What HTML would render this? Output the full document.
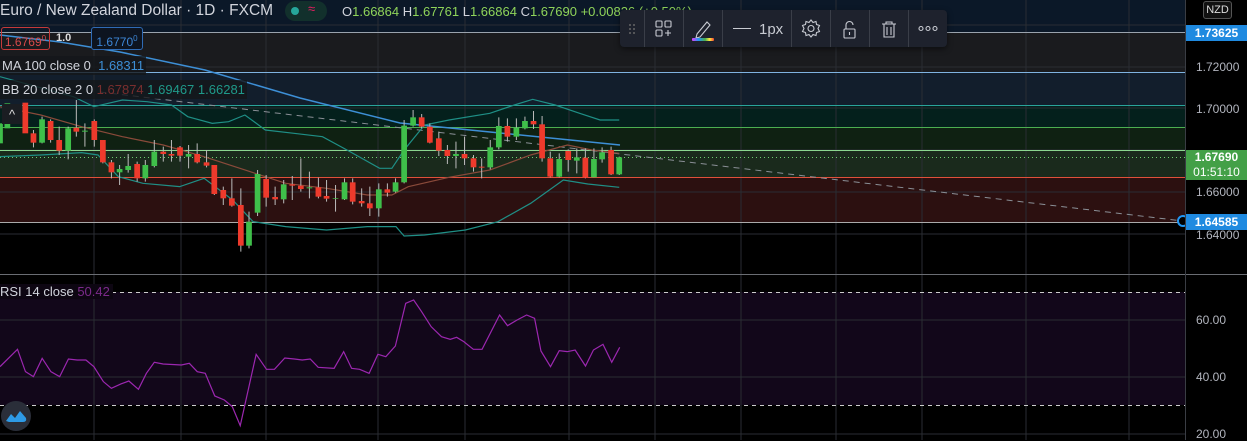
<!DOCTYPE html>
<html><head><meta charset="utf-8"><style>
body{margin:0;width:1247px;height:440px;overflow:hidden;background:#000;font-family:"Liberation Sans",sans-serif;position:relative}
.t{position:absolute;white-space:nowrap}
.lbl{position:absolute;right:0;width:61px;color:#fff;font-size:12px;text-align:center;font-weight:bold}
</style></head><body>
<svg width="1247" height="440" style="position:absolute;left:0;top:0">
<rect x="0" y="0" width="1185" height="32" fill="#0b1828"/>
<rect x="0" y="32" width="1185" height="40" fill="#1a1b1e"/>
<rect x="0" y="72" width="1185" height="33" fill="#121e2c"/>
<rect x="0" y="105" width="1185" height="22" fill="#04201c"/>
<rect x="0" y="127" width="1185" height="23" fill="#0f2112"/>
<rect x="0" y="150" width="1185" height="27" fill="#1a2a1c"/>
<rect x="0" y="177" width="1185" height="45" fill="#2c1010"/>
<rect x="0" y="292" width="1185" height="113" fill="#12071a"/>
<g stroke="#2a2d33" stroke-width="1">
<line x1="94" y1="0" x2="94" y2="440"/><line x1="181" y1="0" x2="181" y2="440"/><line x1="266" y1="0" x2="266" y2="440"/><line x1="378" y1="0" x2="378" y2="440"/><line x1="465" y1="0" x2="465" y2="440"/><line x1="569" y1="0" x2="569" y2="440"/><line x1="655" y1="0" x2="655" y2="440"/><line x1="741" y1="0" x2="741" y2="440"/><line x1="836" y1="0" x2="836" y2="440"/><line x1="922" y1="0" x2="922" y2="440"/><line x1="1026" y1="0" x2="1026" y2="440"/><line x1="1129" y1="0" x2="1129" y2="440"/>
<line x1="0" y1="25" x2="1185" y2="25"/><line x1="0" y1="67" x2="1185" y2="67"/><line x1="0" y1="108" x2="1185" y2="108"/><line x1="0" y1="150" x2="1185" y2="150"/><line x1="0" y1="192" x2="1185" y2="192"/><line x1="0" y1="234" x2="1185" y2="234"/>
<line x1="0" y1="320" x2="1185" y2="320"/><line x1="0" y1="377" x2="1185" y2="377"/><line x1="0" y1="434" x2="1185" y2="434"/>
</g>
<line x1="0" y1="32.5" x2="1185" y2="32.5" stroke="#9aa3ad"/>
<line x1="0" y1="72.5" x2="1185" y2="72.5" stroke="#7fb3e0"/>
<line x1="0" y1="105.5" x2="1185" y2="105.5" stroke="#2aa39a"/>
<line x1="0" y1="127.5" x2="1185" y2="127.5" stroke="#4caf50"/>
<line x1="0" y1="150.5" x2="1185" y2="150.5" stroke="#8bd68f"/>
<line x1="0" y1="177.5" x2="1185" y2="177.5" stroke="#e0503a"/>
<line x1="0" y1="222.5" x2="1185" y2="222.5" stroke="#aaa"/>
<line x1="0" y1="157.5" x2="1185" y2="157.5" stroke="#6fcf6f" stroke-dasharray="1 3"/>
<line x1="100" y1="92" x2="1183" y2="221" stroke="#8a8f96" stroke-dasharray="6 5"/>
<circle cx="1183" cy="221" r="5" fill="#000" stroke="#2196f3" stroke-width="2"/>
<polyline fill="none" stroke="#3d8fd6" stroke-width="1.5" points="0,35 60,42 120,52 205,70 300,98 400,123 500,133 620,145"/>
<g transform="translate(0,90) scale(0.4082,0.3333)" fill="none">
<polyline vector-effect="non-scaling-stroke" stroke="#1f8f86" stroke-width="1.2" points="0,-40 180,20 230,50 300,30 360,35 420,45 460,80 520,100 560,95 600,75 650,120 720,130 790,140 850,180 930,235 960,235 990,180 1040,105 1100,90 1200,70 1260,45 1305,28 1360,45 1420,70 1470,90 1517,90"/>
<polyline vector-effect="non-scaling-stroke" stroke="#1f8f86" stroke-width="1.2" points="0,200 100,195 200,188 240,195 290,260 350,280 440,290 500,265 570,330 620,395 700,410 800,420 900,410 970,410 990,438 1040,435 1140,420 1220,395 1300,340 1380,270 1440,282 1517,292"/>
<polyline vector-effect="non-scaling-stroke" stroke="#8a4a3a" stroke-width="1.2" points="0,50 100,75 200,110 300,140 400,165 500,200 600,240 700,280 800,295 900,315 960,315 1000,290 1100,262 1200,240 1300,195 1390,165 1450,180 1517,190"/>
</g>
<g transform="translate(0,90) scale(0.4082,0.3333)">
<g stroke="#bbb">
<path vector-effect="non-scaling-stroke" d="M82 120V172M103 80V160M124 88V158M145 110V195M167 110V208M187 30V140M208 100V170M231 88V170M252 150V220M273 210V265M293 225V285M314 192V248M336 215V275M356 210V275M378 150V232M400 170V215M420 150V215M441 168V215M462 165V235M483 160V220M506 180V232M525 225V315M547 290V345M568 265V350M590 295V485M610 365V475M631 240V378M652 255V350M674 290V345M695 270V340M716 258V330M737 205V305M758 245V325M780 263V325M800 270V335M822 285V365M844 265V330M864 265V343M886 295V350M906 290V378M928 280V380M949 280V320M969 265V308M990 90V280M1012 60V110M1033 72V115M1053 100V160M1075 125V198M1096 165V222M1117 155V235M1138 140V225M1160 195V245M1180 205V265M1201 150V238M1222 82V178M1243 85V155M1265 85V150M1286 80V118M1307 63V117M1328 78V215M1348 185V262M1370 190V262M1392 178V245M1413 175V250M1434 175V265M1455 175V262M1475 172V218M1497 170V255M1517 200V255"/>
</g>
<g fill="#3fbf4a">
<rect x="-7" y="100" width="14" height="60"/><rect x="11" y="40" width="14" height="75"/><rect x="96" y="88" width="14" height="70"/><rect x="160" y="115" width="14" height="67"/><rect x="201" y="122" width="14" height="3"/><rect x="286" y="237" width="14" height="10"/><rect x="307" y="228" width="14" height="12"/><rect x="349" y="225" width="14" height="40"/><rect x="371" y="185" width="14" height="43"/><rect x="455" y="192" width="14" height="8"/><rect x="603" y="395" width="14" height="72"/><rect x="624" y="252" width="14" height="116"/><rect x="688" y="283" width="14" height="45"/><rect x="751" y="292" width="14" height="3"/><rect x="815" y="325" width="14" height="2"/><rect x="837" y="277" width="14" height="51"/><rect x="921" y="298" width="14" height="57"/><rect x="962" y="277" width="14" height="28"/><rect x="983" y="107" width="14" height="170"/><rect x="1005" y="82" width="14" height="25"/><rect x="1110" y="192" width="14" height="6"/><rect x="1194" y="172" width="14" height="60"/><rect x="1215" y="108" width="14" height="64"/><rect x="1258" y="113" width="14" height="27"/><rect x="1279" y="93" width="14" height="22"/><rect x="1363" y="207" width="14" height="53"/><rect x="1406" y="202" width="14" height="10"/><rect x="1448" y="207" width="14" height="55"/><rect x="1468" y="187" width="14" height="21"/><rect x="1510" y="202" width="14" height="51"/>
</g>
<g fill="#ee3a2c">
<rect x="55" y="38" width="14" height="92"/><rect x="75" y="130" width="14" height="28"/><rect x="117" y="93" width="14" height="57"/><rect x="138" y="150" width="14" height="32"/><rect x="180" y="113" width="14" height="12"/><rect x="224" y="93" width="14" height="57"/><rect x="245" y="150" width="14" height="67"/><rect x="266" y="217" width="14" height="30"/><rect x="329" y="222" width="14" height="43"/><rect x="393" y="185" width="14" height="7"/><rect x="413" y="192" width="14" height="5"/><rect x="434" y="172" width="14" height="25"/><rect x="476" y="192" width="14" height="25"/><rect x="499" y="217" width="14" height="10"/><rect x="518" y="225" width="14" height="87"/><rect x="540" y="300" width="14" height="25"/><rect x="561" y="325" width="14" height="22"/><rect x="583" y="345" width="14" height="122"/><rect x="645" y="267" width="14" height="56"/><rect x="667" y="321" width="14" height="7"/><rect x="709" y="283" width="14" height="4"/><rect x="730" y="287" width="14" height="10"/><rect x="773" y="292" width="14" height="28"/><rect x="793" y="318" width="14" height="8"/><rect x="857" y="277" width="14" height="58"/><rect x="879" y="333" width="14" height="7"/><rect x="899" y="340" width="14" height="15"/><rect x="942" y="298" width="14" height="10"/><rect x="1026" y="82" width="14" height="28"/><rect x="1046" y="110" width="14" height="48"/><rect x="1068" y="145" width="14" height="37"/><rect x="1089" y="180" width="14" height="18"/><rect x="1131" y="192" width="14" height="13"/><rect x="1153" y="205" width="14" height="27"/><rect x="1173" y="230" width="14" height="3"/><rect x="1236" y="108" width="14" height="32"/><rect x="1300" y="93" width="14" height="10"/><rect x="1321" y="103" width="14" height="102"/><rect x="1341" y="205" width="14" height="55"/><rect x="1385" y="183" width="14" height="27"/><rect x="1427" y="203" width="14" height="60"/><rect x="1490" y="180" width="14" height="73"/>
</g>
</g>
<line x1="0" y1="274.5" x2="1247" y2="274.5" stroke="#6a6d73"/>
<line x1="1185.5" y1="0" x2="1185.5" y2="440" stroke="#3a3d44"/>
<line x1="0" y1="292.5" x2="1185" y2="292.5" stroke="#ccc" stroke-dasharray="4 4"/>
<line x1="0" y1="405.5" x2="1185" y2="405.5" stroke="#ccc" stroke-dasharray="4 4"/>
<g transform="translate(0,260) scale(0.7955,0.3333)">
<polyline vector-effect="non-scaling-stroke" fill="none" stroke="#9c27b0" stroke-width="1.2" points="0,320 22,268 32,335 42,350 53,295 64,335 75,350 86,297 97,300 108,300 118,320 130,365 140,385 152,372 162,363 174,388 184,340 194,307 205,312 228,315 238,310 248,335 258,340 270,408 282,420 292,440 302,497 322,283 335,328 345,328 358,294 370,297 380,300 390,297 400,322 420,325 432,275 442,325 452,328 464,340 475,283 485,290 497,258 510,130 520,120 530,155 542,200 555,230 566,238 574,232 583,245 595,268 606,268 628,165 638,197 650,180 662,165 672,175 680,273 692,320 703,272 713,275 723,270 736,318 746,270 758,253 769,307 779,262"/>
</g>
<circle cx="16" cy="416" r="15" fill="#2a2e39"/>
<path d="M6 421 L11 414 L15 418 L20 411 L26 418 Q27 422 23 422 L9 422 Z" fill="#2e9ae6"/>
</svg>

<div class="t" style="left:0;top:2px;font-size:15.5px;color:#d1d4dc">Euro / New Zealand Dollar · 1D · FXCM</div>
<div class="t" style="left:285px;top:1px;width:42px;height:20px;border-radius:10px;background:#12302c"></div>
<div class="t" style="left:291px;top:7px;width:8px;height:8px;border-radius:4px;background:#26a69a"></div>
<div class="t" style="left:308px;top:1px;font-size:13px;color:#e91e63">≈</div>
<div class="t" style="left:342px;top:4px;font-size:13px;color:#8fd45a"><span style="color:#d1d4dc">O</span>1.66864 <span style="color:#d1d4dc">H</span>1.67761 <span style="color:#d1d4dc">L</span>1.66864 <span style="color:#d1d4dc">C</span>1.67690 +0.00826 (+0.50%)</div>
<div class="t" style="left:1px;top:27px;width:47px;height:21px;border:1px solid #c63a3a;border-radius:3px;color:#d84a4a;font-size:12px;line-height:21px;text-align:center">1.6769<sup style="font-size:8px">0</sup></div>
<div class="t" style="left:56px;top:32px;font-size:11px;color:#ddd;font-weight:bold">1.0</div>
<div class="t" style="left:91px;top:27px;width:50px;height:21px;border:1px solid #2f6bb5;border-radius:3px;color:#3d86d6;font-size:12px;line-height:21px;text-align:center;background:#0d1420">1.6770<sup style="font-size:8px">0</sup></div>
<div class="t" style="left:0;top:56px;padding:2px 2px;font-size:13px;color:#d1d4dc;background:rgba(20,22,26,.8)">MA 100 close 0 <span style="color:#3d8fd6">&nbsp;1.68311</span></div>
<div class="t" style="left:0;top:80px;padding:2px 2px;font-size:13px;color:#d1d4dc;background:rgba(20,22,26,.8)">BB 20 close 2 0 <span style="color:#7a2e2e">1.67874</span> <span style="color:#1f9a8a">1.69467</span> <span style="color:#1f9a8a">1.66281</span></div>
<div class="t" style="left:2px;top:104px;width:20px;height:20px;background:#1a1d22;color:#ddd;font-size:13px;text-align:center;line-height:22px">^</div>
<div class="t" style="left:0;top:284px;font-size:13px;color:#d1d4dc;background:#0d0612;padding-right:3px">RSI 14 close <span style="color:#7b2a8a">50.42</span></div>

<div class="t" style="left:620px;top:10px;width:327px;height:37px;background:#1e222d;border-radius:4px;box-shadow:0 2px 6px rgba(0,0,0,.5)"></div>
<svg class="t" style="left:620px;top:10px" width="327" height="37">
<g fill="#666"><circle cx="10" cy="15" r="1"/><circle cx="14" cy="15" r="1"/><circle cx="10" cy="19" r="1"/><circle cx="14" cy="19" r="1"/><circle cx="10" cy="23" r="1"/><circle cx="14" cy="23" r="1"/></g>
<g stroke="#3a3e48"><line x1="24.5" y1="0" x2="24.5" y2="37"/><line x1="63.5" y1="0" x2="63.5" y2="37"/><line x1="102.5" y1="0" x2="102.5" y2="37"/><line x1="171.5" y1="0" x2="171.5" y2="37"/><line x1="210.5" y1="0" x2="210.5" y2="37"/><line x1="249.5" y1="0" x2="249.5" y2="37"/><line x1="288.5" y1="0" x2="288.5" y2="37"/></g>
<g fill="none" stroke="#c8cbd2" stroke-width="1.1">
<rect x="36" y="11" width="6" height="6" rx="1"/><rect x="45" y="11" width="6" height="6" rx="1"/><rect x="36" y="20" width="6" height="6" rx="1"/><path d="M48 20v6M45 23h6"/>
<path d="M77 24 L87 12 L90 15 L80 27 L76 28 Z"/>
<path d="M113 18.5h18"/>
<circle cx="191" cy="18.5" r="3"/><path d="M191 10l2 2.5 3-1 .5 3 3 1-1.5 3 1.5 3-3 1-.5 3-3-1-2 2.5-2-2.5-3 1-.5-3-3-1 1.5-3-1.5-3 3-1 .5-3 3 1z"/>
<rect x="224" y="19" width="11" height="9" rx="1"/><path d="M226 19v-4a3.5 3.5 0 0 1 7 0"/><path d="M229.5 22v3"/>
<path d="M262 14h14M266 14v-2h6v2M264 14v13h10v-13M267 17v8M271 17v8"/>
<circle cx="301" cy="18.5" r="2"/><circle cx="308" cy="18.5" r="2"/><circle cx="315" cy="18.5" r="2"/>
</g>
<rect x="72" y="28" width="22" height="3" rx="1" fill="url(#rb)"/>
<defs><linearGradient id="rb"><stop offset="0" stop-color="#e040fb"/><stop offset=".3" stop-color="#2196f3"/><stop offset=".6" stop-color="#4caf50"/><stop offset=".8" stop-color="#ffeb3b"/><stop offset="1" stop-color="#f44336"/></linearGradient></defs>
<text x="139" y="24" fill="#c8cbd2" font-size="15" font-family="Liberation Sans">1px</text>
</svg>

<div class="t" style="left:1203px;top:1px;width:27px;height:16px;border:1px solid #555;border-radius:3px;background:#111;color:#ddd;font-size:11px;text-align:center;line-height:16px">NZD</div>
<div class="lbl" style="top:25px;height:16px;line-height:16px;background:#1f8ae0">1.73625</div>
<div class="t" style="left:1196px;top:60px;font-size:12px;color:#b2b5be">1.72000</div>
<div class="t" style="left:1196px;top:102px;font-size:12px;color:#b2b5be">1.70000</div>
<div class="lbl" style="top:150px;height:30px;line-height:15px;background:#43a047">1.67690<br><span style="font-weight:normal">01:51:10</span></div>
<div class="t" style="left:1196px;top:185px;font-size:12px;color:#b2b5be">1.66000</div>
<div class="lbl" style="top:214px;height:16px;line-height:16px;background:#1f8ae0">1.64585</div>
<div class="t" style="left:1196px;top:228px;font-size:12px;color:#b2b5be">1.64000</div>
<div class="t" style="left:1196px;top:313px;font-size:12px;color:#b2b5be">60.00</div>
<div class="t" style="left:1196px;top:370px;font-size:12px;color:#b2b5be">40.00</div>
<div class="t" style="left:1196px;top:427px;font-size:12px;color:#b2b5be">20.00</div>
</body></html>
